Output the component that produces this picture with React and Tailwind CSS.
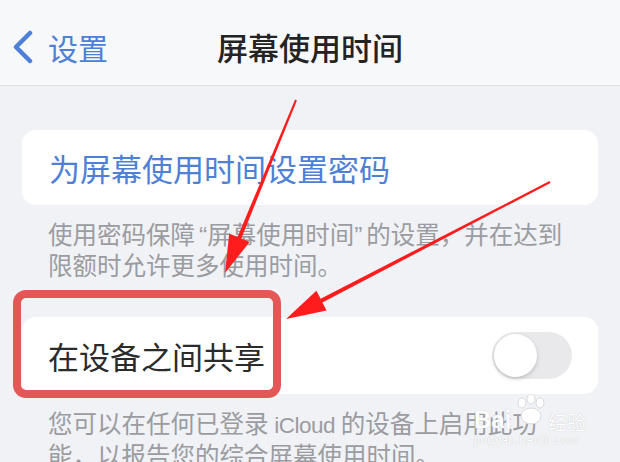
import React from "react";

const font = { fontFamily: '"Noto Sans CJK SC", "Noto Sans", sans-serif' };
const latin = { fontFamily: '"Liberation Sans", "Noto Sans", sans-serif' };

export default function App() {
  return (
    <div className="relative w-[620px] h-[462px] overflow-hidden bg-[#f0f2f5]" style={font}>
      {/* Header */}
      <div className="h-[86px] bg-[#f7f8fa] border-b border-[#dfe0e3] grid grid-cols-[1fr_auto_1fr] items-center pt-[8px]">
        <div className="flex items-center pl-[12px]">
          <svg width="22" height="34" viewBox="0 0 22 34" className="mr-[14px]">
            <polyline points="18,3 4,17 18,31" fill="none" stroke="#4d80d6" strokeWidth="4.5" strokeLinecap="round" strokeLinejoin="round" />
          </svg>
          <span className="text-[30px] leading-none text-[#4d80d6]">设置</span>
        </div>
        <div className="text-[31px] leading-none font-medium text-[#232323]">屏幕使用时间</div>
        <div />
      </div>

      {/* Section 1 */}
      <div className="px-[22px] pt-[44px]">
        <div className="h-[75px] bg-white rounded-[14px] flex items-center pl-[27px]">
          <span className="text-[31px] leading-none text-[#4d80d6]">为屏幕使用时间设置密码</span>
        </div>
        <div className="pl-[26px] pt-[14px] text-[24.5px] leading-[29px] text-[#9b9ca1] whitespace-nowrap">
          使用密码保障<span className="pl-[4px]" style={latin}>“</span>屏幕使用时间<span className="pr-[4px]" style={latin}>”</span>的设置，并在达到
          <br />
          限额时允许更多使用时间。
        </div>
      </div>

      {/* Section 2 */}
      <div className="px-[22px] pt-[38px]">
        <div className="h-[77px] bg-white rounded-[14px] flex items-center justify-between pl-[26px] pr-[26px]">
          <span className="text-[31px] leading-none text-[#2b2b2b]">在设备之间共享</span>
          <div className="w-[80px] h-[47px] rounded-full bg-[#e9e9eb] p-[2px] flex items-center">
            <div className="w-[43px] h-[43px] rounded-full bg-white shadow-[0_2px_4px_rgba(0,0,0,0.18)]" />
          </div>
        </div>
        <div className="pl-[26px] pt-[14px] text-[24.5px] leading-[29px] text-[#9b9ca1] whitespace-nowrap">
          您可以在任何已登录<span className="text-[22.5px] tracking-[-0.5px]" style={latin}> iCloud </span>的设备上启用此功
          <br />
          能，以报告您的综合屏幕使用时间。
        </div>
      </div>

      {/* Red highlight box */}
      <div className="absolute left-[13px] top-[290px] w-[268px] h-[108px] border-[8px] border-[#e35757] rounded-[13px]" />

      {/* Arrows */}
      <svg className="absolute left-0 top-0 pointer-events-none" width="620" height="462" viewBox="0 0 620 462">
        <polygon
          fill="#ff1c1c"
          points="295.1,99.6 237.5,237.0 229.2,233.6 225,273 249.6,242.0 241.3,238.6 296.9,100.4"
        />
        <polygon
          fill="#ff1c1c"
          points="549.5,181.1 320.6,298.8 316.4,290.8 286,319 326.6,310.4 322.4,302.4 550.5,182.9"
        />
      </svg>

      {/* Watermark */}
      <div className="absolute left-[474px] top-[394px] w-[120px] h-[56px] pointer-events-none">
        <svg className="absolute left-[40px] top-[0px]" width="34" height="32" viewBox="0 0 34 32">
          <g fill="white" stroke="#d8d9dc" strokeWidth="1">
            <ellipse cx="8" cy="9" rx="4" ry="5" />
            <ellipse cx="17" cy="5" rx="4" ry="5" />
            <ellipse cx="26" cy="9" rx="4" ry="5" />
            <ellipse cx="17" cy="22" rx="10" ry="8" />
          </g>
        </svg>
        <div
          className="absolute left-[0px] top-[14px] text-[24px] leading-none font-bold text-white"
          style={{ fontFamily: '"Liberation Sans", sans-serif', textShadow: "0 0 1px #b8b9bd" }}
        >
          Bai
        </div>
        <div
          className="absolute left-[74px] top-[18px] text-[19px] leading-none text-white"
          style={{ textShadow: "0 0 1px #b8b9bd" }}
        >
          经验
        </div>
        <div
          className="absolute left-[0px] top-[40px] text-[12px] leading-none text-white tracking-[0.5px]"
          style={{ fontFamily: '"Liberation Sans", sans-serif', textShadow: "0 0 1px #b8b9bd" }}
        >
          jingyan.baidu.com
        </div>
      </div>
    </div>
  );
}
